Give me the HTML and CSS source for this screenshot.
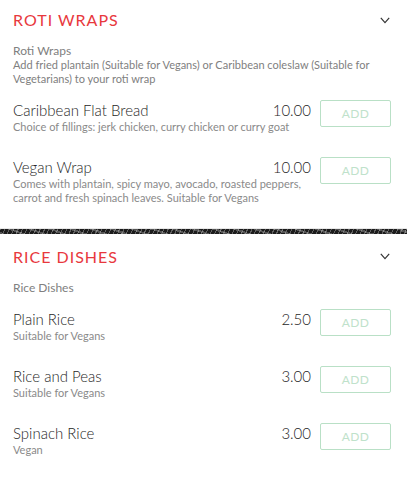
FILE: index.html
```html
<!DOCTYPE html>
<html lang="en">
<head>
<meta charset="utf-8">
<title>Menu</title>
<link rel="stylesheet" href="styles.css">
</head>
<body>
<div class="menu">
  <section class="card card-first">
    <div class="card-head">
      <h2 class="card-title">ROTI WRAPS</h2>
      <svg class="chevron" width="10" height="7" viewBox="0 0 10 7" aria-hidden="true"><path d="M0.8 0.8 L5 5.6 L9.2 0.8" fill="none" stroke="#333" stroke-width="1.2"/></svg>
    </div>
    <div class="card-desc">
      <p class="card-sub">Roti Wraps</p>
      <p class="card-text">Add fried plantain (Suitable for Vegans) or Caribbean coleslaw (Suitable for Vegetarians) to your roti wrap</p>
    </div>
    <div class="item">
      <div class="info">
        <div class="line"><span class="name">Caribbean Flat Bread</span><span class="price">10.00</span></div>
        <p class="desc">Choice of fillings: jerk chicken, curry chicken or curry goat</p>
      </div>
      <button class="add">ADD</button>
    </div>
    <div class="item">
      <div class="info">
        <div class="line"><span class="name">Vegan Wrap</span><span class="price">10.00</span></div>
        <p class="desc">Comes with plantain, spicy mayo, avocado, roasted peppers, carrot and fresh spinach leaves. Suitable for Vegans</p>
      </div>
      <button class="add">ADD</button>
    </div>
  </section>
  <div class="band"></div>
  <section class="card card-last">
    <div class="card-head">
      <h2 class="card-title">RICE DISHES</h2>
      <svg class="chevron" width="10" height="7" viewBox="0 0 10 7" aria-hidden="true"><path d="M0.8 0.8 L5 5.6 L9.2 0.8" fill="none" stroke="#333" stroke-width="1.2"/></svg>
    </div>
    <div class="card-desc">
      <p class="card-sub">Rice Dishes</p>
    </div>
    <div class="item">
      <div class="info">
        <div class="line"><span class="name">Plain Rice</span><span class="price">2.50</span></div>
        <p class="desc">Suitable for Vegans</p>
      </div>
      <button class="add">ADD</button>
    </div>
    <div class="item">
      <div class="info">
        <div class="line"><span class="name">Rice and Peas</span><span class="price">3.00</span></div>
        <p class="desc">Suitable for Vegans</p>
      </div>
      <button class="add">ADD</button>
    </div>
    <div class="item">
      <div class="info">
        <div class="line"><span class="name">Spinach Rice</span><span class="price">3.00</span></div>
        <p class="desc">Vegan</p>
      </div>
      <button class="add">ADD</button>
    </div>
  </section>
</div>
</body>
</html>
```
FILE: styles.css
```css
* { box-sizing: border-box; }
html, body { margin: 0; padding: 0; background: #fff; }
body { font-family: Lato, "Open Sans", sans-serif; color: #333; }
p { margin: 0; }

.menu { display: flex; flex-direction: column; }

.card {
  padding: 12.5px 16px 0 13px;
  border-bottom: 1px solid #e8e8e8;
  background: #fff;
}
.card-first { padding-top: 10px; }
.card-last { border-bottom: 0; }

.card-head {
  display: flex;
  align-items: center;
  justify-content: space-between;
  height: 20px;
}
.card-title {
  margin: 0;
  font-size: 16px;
  font-weight: 400;
  line-height: 20px;
  letter-spacing: 1px;
  color: #e8383d;
}
.chevron { display: block; margin-right: 1px; }

.card-desc {
  margin-top: 14px;
  margin-bottom: 14px;
  color: #808080;
}
.card-sub {
  font-size: 12px;
  line-height: 14.4px;
}
.card-text {
  font-size: 11px;
  line-height: 14px;
}

.item {
  display: flex;
  gap: 9px;
  align-items: flex-start;
  padding-bottom: 23px;
}
.info { flex: 1; min-width: 0; }
.line {
  display: flex;
  justify-content: space-between;
  font-size: 15px;
  font-weight: 300;
  line-height: 20px;
  color: #262626;
}
.desc {
  font-size: 11px;
  line-height: 14px;
  color: #8a8a8a;
}
.add {
  flex: none;
  width: 71px;
  height: 27px;
  margin: 0;
  padding: 0;
  background: #fff;
  border: 1px solid #b9e0c6;
  border-radius: 2px;
  font-family: Lato, "Open Sans", sans-serif;
  font-size: 12px;
  color: #bfe2cb;
  letter-spacing: 0.3px;
}

.band {
  height: 5px;
  background:
    repeating-linear-gradient(115deg, rgba(255,255,255,0.3) 0 1px, transparent 1px 4px),
    repeating-linear-gradient(20deg, rgba(140,140,140,0.5) 0 2px, transparent 2px 7px),
    #1c1c1c;
}
```
